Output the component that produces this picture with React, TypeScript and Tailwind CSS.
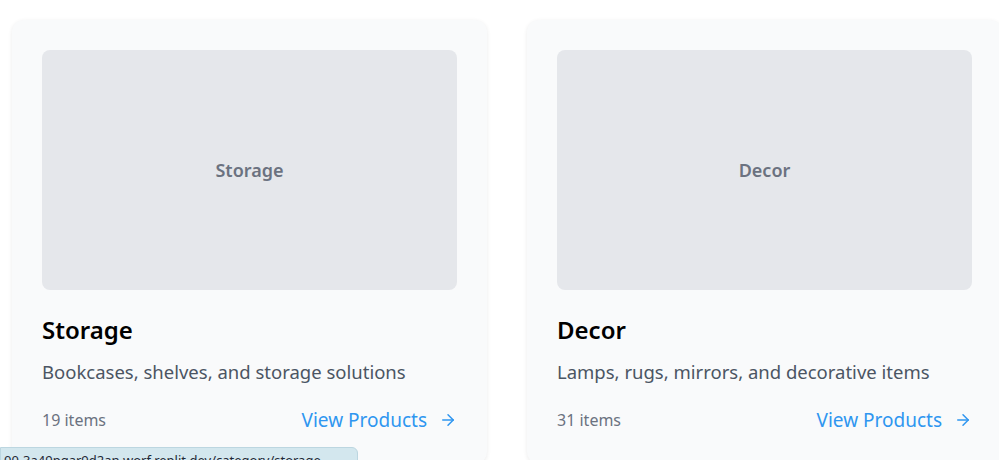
import { ArrowRight } from 'lucide-react';

interface Category {
  name: string;
  description: string;
  count: number;
}

const CATEGORIES: Category[] = [
  { name: 'Storage', description: 'Bookcases, shelves, and storage solutions', count: 19 },
  { name: 'Decor', description: 'Lamps, rugs, mirrors, and decorative items', count: 31 },
];

function CategoryCard({ c }: { c: Category }) {
  return (
    <div className="w-[475px] shrink-0 rounded-xl bg-[#f9fafb] p-[30px] shadow-[0_1px_4px_rgba(0,0,0,0.08)]">
      <div className="flex h-[240px] items-center justify-center rounded-lg bg-[#e5e7eb]">
        <span className="text-lg font-semibold text-[#6b7280]">{c.name}</span>
      </div>
      <h3 className="mt-6 text-2xl leading-8 font-semibold text-black">{c.name}</h3>
      <p className="mt-3 text-[18.5px] leading-7 text-[#4b5563]">{c.description}</p>
      <div className="mt-5 flex items-center justify-between leading-7">
        <span className="text-base text-[#6b7280]">{c.count} items</span>
        <a className="flex items-center gap-3 text-[19px] text-[#2f96f0]" href="#">
          View Products
          <ArrowRight size={18} strokeWidth={2} />
        </a>
      </div>
    </div>
  );
}

export default function App() {
  return (
    <div
      className="relative h-[460px] w-[999px] overflow-hidden bg-white"
      style={{ fontFamily: '"Noto Sans", "Open Sans", sans-serif' }}
    >
      <div className="flex gap-10 pt-5 pl-3">
        {CATEGORIES.map(c => (
          <CategoryCard key={c.name} c={c} />
        ))}
      </div>

      {/* browser link-hover status bar, cut off by the window edge */}
      <div className="absolute top-[447px] left-0 h-6 w-[358px] rounded-tr-md border border-[#bcd6e0] bg-[#d3e7ee] px-[3px] pt-[4px] text-[13px] leading-4 text-[#1f2937] whitespace-nowrap overflow-hidden">
        00-3a49pgar9d2an.worf.replit.dev/category/storage
      </div>
    </div>
  );
}
